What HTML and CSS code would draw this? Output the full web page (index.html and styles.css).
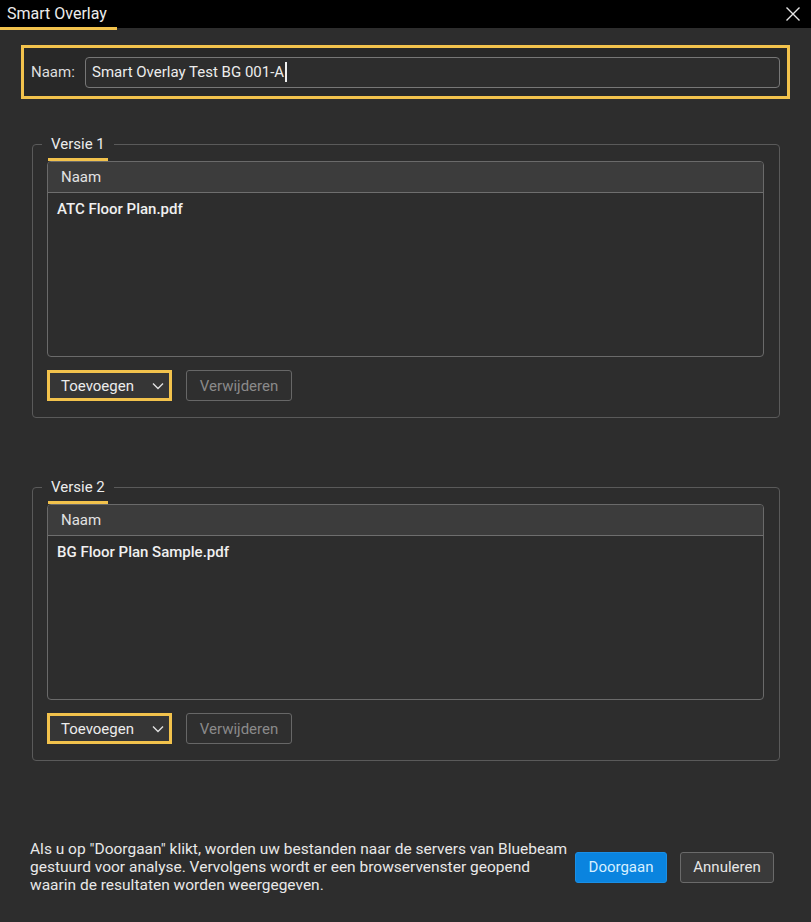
FILE: index.html
```html
<!DOCTYPE html>
<html lang="nl">

<head>
    <meta charset="utf-8">
    <title>Smart Overlay</title>
    <link rel="stylesheet" href="styles.css">
</head>

<body>
    <div class="titlebar">
        <span class="title">Smart Overlay</span>
        <span class="close">
            <svg width="16" height="16" viewBox="0 0 16 16">
                <path d="M1.5 1.5 L14.5 14.5 M14.5 1.5 L1.5 14.5" stroke="#e6e6e6" stroke-width="1.4" fill="none" />
            </svg>
        </span>
    </div>

    <div class="main">
        <div class="name_box">
            <label>Naam:</label>
            <div class="field">Smart Overlay Test BG 001-A<span class="caret"></span></div>
        </div>

        <div class="group">
            <div class="legend"><span>Versie 1</span></div>
            <div class="list">
                <div class="list_head">Naam</div>
                <ul class="list_body">
                    <li>ATC Floor Plan.pdf</li>
                </ul>
            </div>
            <div class="actions">
                <button class="btn btn_add">Toevoegen
                    <svg width="12" height="8" viewBox="0 0 12 8">
                        <path d="M1 1.5 L6 6.5 L11 1.5" stroke="#e0e0e0" stroke-width="1.4" fill="none" />
                    </svg>
                </button>
                <button class="btn btn_off">Verwijderen</button>
            </div>
        </div>

        <div class="group group_2">
            <div class="legend"><span>Versie 2</span></div>
            <div class="list">
                <div class="list_head">Naam</div>
                <ul class="list_body">
                    <li>BG Floor Plan Sample.pdf</li>
                </ul>
            </div>
            <div class="actions">
                <button class="btn btn_add">Toevoegen
                    <svg width="12" height="8" viewBox="0 0 12 8">
                        <path d="M1 1.5 L6 6.5 L11 1.5" stroke="#e0e0e0" stroke-width="1.4" fill="none" />
                    </svg>
                </button>
                <button class="btn btn_off">Verwijderen</button>
            </div>
        </div>

        <div class="footer">
            <p class="note">Als u op "Doorgaan" klikt, worden uw bestanden naar de servers van Bluebeam
                gestuurd voor analyse. Vervolgens wordt er een browservenster geopend
                waarin de resultaten worden weergegeven.</p>
            <div class="footer_btns">
                <button class="btn btn_blue">Doorgaan</button>
                <button class="btn btn_grey">Annuleren</button>
            </div>
        </div>
    </div>
</body>

</html>
```

FILE: styles.css
```css
* {
    padding: 0;
    margin: 0;
    box-sizing: border-box;
}

html,
body {
    height: 100%;
    font-family: Roboto, "Liberation Sans", sans-serif;
    font-size: 15px;
    color: #e6e6e6;
    background: #2d2d2d;
}

ul,
li {
    list-style: none;
}

.titlebar {
    height: 28px;
    background: #000;
    display: flex;
    justify-content: space-between;
    align-items: center;
    position: relative;
}

.title {
    font-size: 16px;
    color: #ececec;
    padding: 0 4px 0 7px;
    line-height: 28px;
    height: 30px;
    width: 117px;
    border-bottom: 3px solid #f2c24c;
    margin-top: 2px;
    white-space: nowrap;
}

.close {
    display: flex;
    margin-right: 10px;
}

.main {
    padding: 0 21px;
}

.name_box {
    margin-top: 17px;
    height: 54px;
    border: 3px solid #f2c24c;
    background: #282828;
    display: flex;
    align-items: center;
    padding: 0 7px;
}

.name_box label {
    color: #dedede;
    width: 54px;
    flex-shrink: 0;
}

.field {
    flex: 1;
    height: 31px;
    border: 1px solid #777;
    border-radius: 4px;
    background: #2d2d2d;
    padding: 0 6px;
    line-height: 29px;
    color: #ececec;
    display: flex;
    align-items: center;
}

.caret {
    display: inline-block;
    width: 1.5px;
    height: 20px;
    background: #f0f0f0;
    margin-left: 1px;
}

.group {
    position: relative;
    margin: 45px 10px 0 11px;
    border: 1px solid #5a5a5a;
    border-radius: 4px;
    padding: 16px 15px 16px 14px;
}

.group_2 {
    margin-top: 69px;
}

.legend {
    position: absolute;
    top: -10px;
    left: 9px;
    padding: 0 6px;
    background: #2d2d2d;
}

.legend span {
    display: block;
    line-height: 18px;
    padding: 0 3px 5px 3px;
    border-bottom: 3px solid #f2c24c;
    color: #ececec;
}

.list {
    height: 196px;
    border: 1px solid #6a6a6a;
    border-radius: 4px;
    overflow: hidden;
}

.list_head {
    height: 31px;
    line-height: 30px;
    background: #3c3c3c;
    border-bottom: 1px solid #6e6e6e;
    padding-left: 13px;
    color: #e2e2e2;
}

.list_body li {
    padding: 7px 9px;
    line-height: 18px;
    font-weight: 500;
    color: #f0f0f0;
}

.actions {
    display: flex;
    gap: 14px;
    margin-top: 13px;
}

.btn {
    font-family: Roboto, "Liberation Sans", sans-serif;
    font-size: 15px;
    height: 31px;
    border-radius: 3px;
    cursor: pointer;
}

.btn_add {
    width: 125px;
    border: 3px solid #f2c24c;
    border-radius: 0;
    background: #363636;
    color: #ececec;
    display: flex;
    align-items: center;
    justify-content: space-between;
    padding: 0 5px 0 11px;
}

.btn_off {
    width: 106px;
    border: 1px solid #676767;
    background: #2f2f2f;
    color: #8a8a8a;
}

.footer {
    margin-top: 79px;
    display: flex;
    align-items: center;
    justify-content: space-between;
    padding: 0 16px 0 9px;
}

.note {
    width: 542px;
    line-height: 18px;
    font-size: 15.5px;
    color: #e8e8e8;
}

.footer_btns {
    display: flex;
    gap: 13px;
}

.btn_blue {
    width: 92px;
    border: 1px solid #1a8fe6;
    background: #0a84df;
    color: #d6f0ff;
}

.btn_grey {
    width: 94px;
    border: 1px solid #6a6a6a;
    background: #3a3a3a;
    color: #e6e6e6;
}
```
